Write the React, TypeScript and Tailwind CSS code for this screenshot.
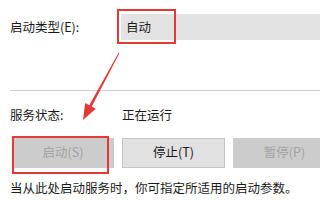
export default function App() {
  return (
    <div className="relative h-[200px] w-[320px] overflow-hidden bg-white font-['Noto_Sans_CJK_SC','Noto_Sans',sans-serif] text-[12.5px] text-[#1a1a1a]">
      <div className="mt-[14px] flex items-center">
        <div className="w-[121px] pl-[10px]">启动类型(E):</div>
        <div className="relative flex h-[26px] flex-1 items-center bg-[#e3e3e3] pl-[5px]">
          自动
          <span className="absolute left-[-4px] top-[-5px] h-[35px] w-[59px] border-2 border-[#e53935]" />
        </div>
      </div>

      <div className="ml-[10px] mt-[50px] h-px bg-[#cfcfcf]" />

      <div className="mt-[15px] flex items-center">
        <div className="w-[122px] pl-[10px]">服务状态:</div>
        <div>正在运行</div>
      </div>

      <div className="mt-[13px] flex gap-[8px] pl-[12px]">
        <div className="relative flex h-[30px] w-[102px] shrink-0 items-center justify-center bg-[#cccccc] text-[#a3a3a3]">
          启动(S)
          <span className="absolute left-0 top-[-2px] h-[38px] w-[97px] border-2 border-[#e53935]" />
        </div>
        <div className="flex h-[30px] w-[103px] shrink-0 items-center justify-center border border-[#c4c4c4] bg-[#e1e1e1] text-[#1a1a1a]">
          停止(T)
        </div>
        <div className="flex h-[30px] w-[103px] shrink-0 items-center justify-center bg-[#cccccc] text-[#a3a3a3]">
          暂停(P)
        </div>
      </div>

      <div className="mt-[11px] pl-[10px]">当从此处启动服务时，你可指定所适用的启动参数。</div>

      <svg className="pointer-events-none absolute left-0 top-0" width="320" height="200" viewBox="0 0 320 200">
        <polygon
          fill="#e53935"
          points="118.6,52.8 119.4,53.2 91.8,106.6 95.8,108.7 83,120 85.2,103.1 89.2,105.2"
        />
      </svg>
    </div>
  );
}
